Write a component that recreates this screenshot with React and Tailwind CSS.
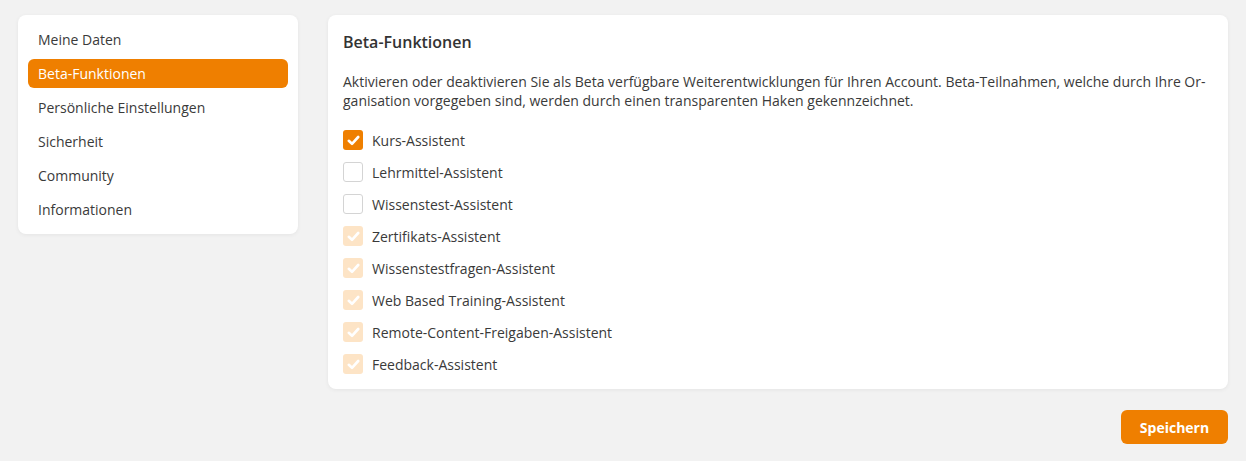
import { useState } from "react";

const navItems = [
  "Meine Daten",
  "Beta-Funktionen",
  "Persönliche Einstellungen",
  "Sicherheit",
  "Community",
  "Informationen",
];

// state: "on" | "off" | "org" (vorgegeben durch Organisation)
const betaFeatures = [
  { label: "Kurs-Assistent", state: "on" },
  { label: "Lehrmittel-Assistent", state: "off" },
  { label: "Wissenstest-Assistent", state: "off" },
  { label: "Zertifikats-Assistent", state: "org" },
  { label: "Wissenstestfragen-Assistent", state: "org" },
  { label: "Web Based Training-Assistent", state: "org" },
  { label: "Remote-Content-Freigaben-Assistent", state: "org" },
  { label: "Feedback-Assistent", state: "org" },
];

const Check = () => (
  <svg width="13" height="11" viewBox="0 0 13 11" fill="none">
    <path
      d="M1.8 5.8 L5 8.8 L11.2 2"
      stroke="white"
      strokeWidth="2.6"
      strokeLinecap="round"
      strokeLinejoin="round"
    />
  </svg>
);

const Checkbox = ({ state }) => {
  if (state === "on") {
    return (
      <span className="flex h-5 w-5 items-center justify-center rounded-[3px] bg-[#ef7f00]">
        <Check />
      </span>
    );
  }
  if (state === "org") {
    return (
      <span className="flex h-5 w-5 items-center justify-center rounded-[3px] bg-[#fde4c6]">
        <Check />
      </span>
    );
  }
  return (
    <span className="block h-5 w-5 rounded-[3px] border border-[#d4d4d4] bg-white" />
  );
};

const App = () => {
  const [active] = useState("Beta-Funktionen");

  return (
    <div
      className="min-h-[461px] bg-[#f2f2f2] px-[18px] pt-[15px] text-[#333333]"
      style={{ fontFamily: '"Open Sans", "Liberation Sans", sans-serif' }}
    >
      <div className="flex items-start gap-[30px]">
        <nav className="flex w-[280px] flex-col gap-[5px] rounded-lg bg-white px-[10px] py-[10px] shadow-[0_1px_4px_rgba(0,0,0,0.06)]">
          {navItems.map((item) => (
            <div
              key={item}
              className={
                item === active
                  ? "flex h-[29px] items-center rounded-md bg-[#ef7f00] px-[10px] text-[14px] text-white"
                  : "flex h-[29px] items-center px-[10px] text-[14px] text-[#3a3a3a]"
              }
            >
              {item}
            </div>
          ))}
        </nav>

        <div className="flex flex-1 flex-col items-end">
          <div className="w-full rounded-lg bg-white px-[15px] pb-[9px] pt-[15px] shadow-[0_1px_4px_rgba(0,0,0,0.06)]">
            <h2 className="text-[16px] font-semibold leading-6 text-[#333333]">
              Beta-Funktionen
            </h2>
            <p className="mt-[18px] text-[14px] leading-[19px] text-[#3a3a3a]">
              Aktivieren oder deaktivieren Sie als Beta verfügbare Weiterentwicklungen für Ihren Account. Beta-Teilnahmen, welche durch Ihre Or-
              <br />
              ganisation vorgegeben sind, werden durch einen transparenten Haken gekennzeichnet.
            </p>
            <div className="mt-[14px] flex flex-col">
              {betaFeatures.map((f) => (
                <label key={f.label} className="flex h-8 items-center gap-[9px]">
                  <Checkbox state={f.state} />
                  <span className="text-[14px] text-[#3a3a3a]">{f.label}</span>
                </label>
              ))}
            </div>
          </div>

          <button className="mt-[21px] h-[34px] w-[107px] rounded-md bg-[#ef7f00] text-[14px] font-bold text-white">
            Speichern
          </button>
        </div>
      </div>
    </div>
  );
};

export default App;
